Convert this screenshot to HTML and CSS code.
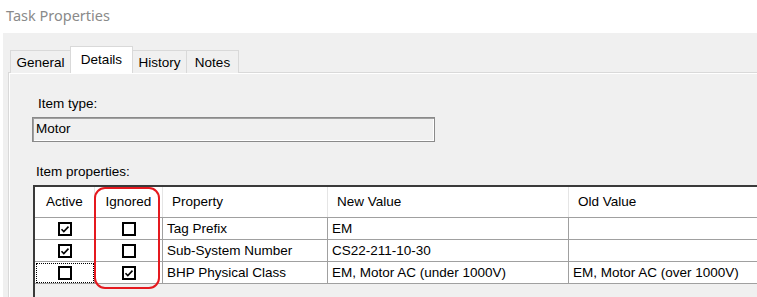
FILE: index.html
```html
<!DOCTYPE html>
<html lang="en">
<head>
  <meta charset="UTF-8" />
  <title>Task Properties</title>
  <link rel="stylesheet" href="styles.css">
</head>
<body>
  <div class="titulo">Task Properties</div>

  <div class="ventana">
    <div class="tabs">
      <div class="tab tab-general">General</div>
      <div class="tab tab-details activa">Details</div>
      <div class="tab tab-history">History</div>
      <div class="tab tab-notes">Notes</div>
    </div>

    <div class="panel">
      <div class="etiqueta">Item type:</div>
      <div class="caja">Motor</div>

      <div class="etiqueta etiqueta-props">Item properties:</div>

      <div class="grid">
        <div class="fila cabecera">
          <div class="celda c-active centro">Active</div>
          <div class="celda c-ignored centro">Ignored</div>
          <div class="celda c-prop">Property</div>
          <div class="celda c-new">New Value</div>
          <div class="celda c-old">Old Value</div>
        </div>

        <div class="fila">
          <div class="celda c-active centro">
            <svg class="check" width="14" height="14" viewBox="0 0 14 14"><rect x="1" y="1" width="12" height="12" fill="#fff" stroke="#000" stroke-width="2"/><path d="M3.5 7.2 L5.8 9.5 L10.5 4.6" fill="none" stroke="#000" stroke-width="1.6"/></svg>
          </div>
          <div class="celda c-ignored centro">
            <svg class="check" width="14" height="14" viewBox="0 0 14 14"><rect x="1" y="1" width="12" height="12" fill="#fff" stroke="#000" stroke-width="2"/></svg>
          </div>
          <div class="celda c-prop">Tag Prefix</div>
          <div class="celda c-new">EM</div>
          <div class="celda c-old"></div>
        </div>

        <div class="fila">
          <div class="celda c-active centro">
            <svg class="check" width="14" height="14" viewBox="0 0 14 14"><rect x="1" y="1" width="12" height="12" fill="#fff" stroke="#000" stroke-width="2"/><path d="M3.5 7.2 L5.8 9.5 L10.5 4.6" fill="none" stroke="#000" stroke-width="1.6"/></svg>
          </div>
          <div class="celda c-ignored centro">
            <svg class="check" width="14" height="14" viewBox="0 0 14 14"><rect x="1" y="1" width="12" height="12" fill="#fff" stroke="#000" stroke-width="2"/></svg>
          </div>
          <div class="celda c-prop">Sub-System Number</div>
          <div class="celda c-new">CS22-211-10-30</div>
          <div class="celda c-old"></div>
        </div>

        <div class="fila">
          <div class="celda c-active centro foco">
            <svg class="check" width="14" height="14" viewBox="0 0 14 14"><rect x="1" y="1" width="12" height="12" fill="#fff" stroke="#000" stroke-width="2"/></svg>
          </div>
          <div class="celda c-ignored centro">
            <svg class="check" width="14" height="14" viewBox="0 0 14 14"><rect x="1" y="1" width="12" height="12" fill="#fff" stroke="#000" stroke-width="2"/><path d="M3.5 7.2 L5.8 9.5 L10.5 4.6" fill="none" stroke="#000" stroke-width="1.6"/></svg>
          </div>
          <div class="celda c-prop">BHP Physical Class</div>
          <div class="celda c-new">EM, Motor AC (under 1000V)</div>
          <div class="celda c-old">EM, Motor AC (over 1000V)</div>
        </div>

        <!-- marca roja sobre la columna Ignored -->
        <div class="marca"></div>
      </div>
    </div>
  </div>
</body>
</html>
```

FILE: styles.css
```css
body {
  margin: 0;
  background: #fff;
  font-family: "Liberation Sans", Arial, sans-serif;
  font-size: 13.5px;
  color: #000;
  width: 757px;
  height: 297px;
  overflow: hidden;
}
.titulo {
  height: 33px;
  padding-left: 6px;
  line-height: 30px;
  font-family: "Noto Sans", "Open Sans", sans-serif;
  font-size: 14.5px;
  color: #8a8a8a;
}
.ventana {
  background: #f0f0f0;
  margin-left: 3px;
  height: 264px;
  padding: 13px 0 0 5px;
  box-sizing: border-box;
  overflow: hidden;
}
.tabs {
  display: flex;
  align-items: flex-end;
  height: 27px;
  padding-left: 2px;
  position: relative;
  z-index: 1;
}
.tab {
  height: 23px;
  line-height: 24px;
  font-size: 13.5px;
  text-align: center;
  background: #f0f0f0;
  border: 1px solid #d9d9d9;
  border-bottom: none;
  box-sizing: border-box;
}
.tab-general { width: 61px; margin-right: -1px; }
.tab-details { width: 63px; }
.tab-history { width: 55px; margin-left: -1px; }
.tab-notes { width: 53px; margin-left: -1px; }
.tab.activa {
  height: 27px;
  line-height: 26px;
  background: #fff;
  border-color: #d9d9d9;
  padding-bottom: 2px;
}
.panel {
  margin-top: -1px;
  border: 1px solid #d9d9d9;
  border-right: none;
  box-shadow: inset 1px 1px 0 #fff;
  height: 260px;
  padding: 0 0 0 23px;
}
.etiqueta {
  margin: 23px 0 0 6px;
  line-height: 16px;
}
.etiqueta-props {
  margin: 22px 0 0 4px;
}
.caja {
  margin-top: 5px;
  width: 403px;
  height: 25px;
  box-sizing: border-box;
  border: 1px solid #8a8a8a;
  box-shadow: inset 1px 1px 0 #a0a0a0, inset -1px -1px 0 #fff;
  padding-left: 3px;
  line-height: 22px;
}
.grid {
  position: relative;
  margin: 5px 0 0 1px;
  width: 760px;
  height: 120px;
  border-top: 2px solid #3a3a3a;
  border-left: 2px solid #3a3a3a;
  background: #f0f0f0;
}
.fila {
  display: flex;
  height: 22px;
  background: #fff;
}
.fila.cabecera {
  height: 30px;
  border-bottom: 1px solid #a0a0a0;
}
.celda {
  box-sizing: border-box;
  border-right: 1px solid #a0a0a0;
  border-bottom: 1px solid #a0a0a0;
  padding-left: 4px;
  line-height: 21px;
  white-space: nowrap;
  overflow: hidden;
}
.cabecera .celda {
  border-right: 1px solid #e5e5e5;
  border-bottom: none;
  line-height: 30px;
  padding-left: 9px;
}
.cabecera .centro {
  padding-left: 0;
}
.centro {
  display: flex;
  justify-content: center;
  align-items: center;
  padding-left: 0;
}
.c-active { width: 60px; }
.c-ignored { width: 68px; }
.c-prop { width: 165px; }
.c-new { width: 241px; }
.c-old { width: 226px; }
.foco {
  outline: 1px dotted #000;
  outline-offset: -2px;
}
.check {
  display: block;
}
.marca {
  position: absolute;
  left: 59px;
  top: 0px;
  width: 66px;
  height: 102px;
  border: 2.5px solid #e5191f;
  border-radius: 11px;
  box-sizing: border-box;
}
```
